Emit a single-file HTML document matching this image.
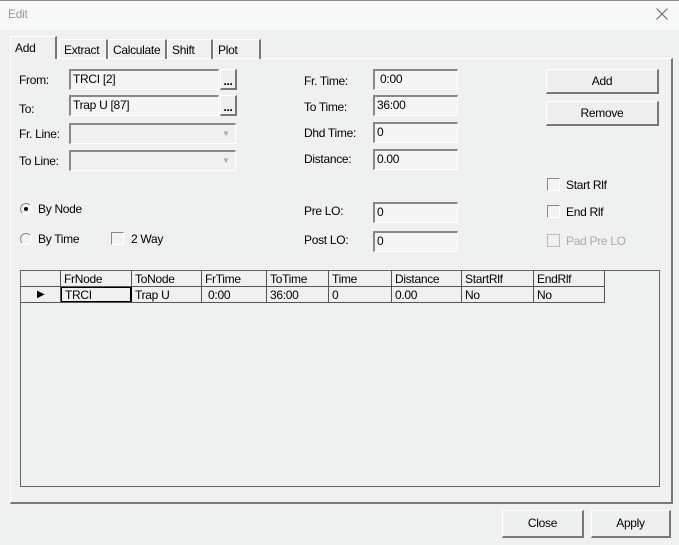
<!DOCTYPE html><html><head><style>
body{margin:0;width:679px;height:545px;background:#eff0f0;font-family:"Liberation Sans",sans-serif;font-size:12px;color:#000;position:relative;overflow:hidden;letter-spacing:-0.3px}
div,span,svg{position:absolute;box-sizing:border-box}
.title{left:0;top:0;width:679px;height:30px;background:#f7f8f8;border-top:1px solid #888}
.in{background:#f4f5f5;border-top:2px solid #888;border-left:2px solid #888;border-bottom:1px solid #fff;border-right:1px solid #fff;padding:0 2px;line-height:16px;height:21px}
.btn{background:#eef0f0;border-top:1px solid #fff;border-left:1px solid #fff;border-right:2px solid #777;border-bottom:2px solid #777;text-align:center}
.lbl{line-height:14px}
.cb{width:13px;height:13px;border-top:1px solid #888;border-left:1px solid #888;border-right:1px solid #fff;border-bottom:1px solid #fff;background:#f2f3f3}
.rd{width:12px;height:12px;border-radius:50%;border-top:1px solid #888;border-left:1px solid #888;border-right:1px solid #fff;border-bottom:1px solid #fff;background:#f2f3f3}
.tab{top:39px;height:20px;border-top:1px solid #fff;border-left:1px solid #fff;border-right:2px solid #777;padding:3px 4px 0;}
.c{top:0;height:100%;border-right:1px solid #555;padding-left:3px;line-height:16px}
</style></head><body>
<div class="title"></div>
<span style="left:8px;top:7px;color:#999;font-size:12px">Edit</span>
<svg style="left:656px;top:8px" width="12" height="12"><path d="M0.5 0.5L11.5 11.5M11.5 0.5L0.5 11.5" stroke="#666" stroke-width="1"/></svg>
<div style="left:10px;top:58px;width:663px;height:446px;border-top:1px solid #fff;border-left:1px solid #fff;border-right:2px solid #777;border-bottom:2px solid #777"></div>
<div class="tab" style="left:10px;top:36px;height:23px;width:47px;background:#eff0f0;border-bottom:none;padding-top:4px">Add</div>
<div class="tab" style="left:59px;width:49px">Extract</div>
<div class="tab" style="left:108px;width:59px">Calculate</div>
<div class="tab" style="left:167px;width:46px">Shift</div>
<div class="tab" style="left:213px;width:48px">Plot</div>
<span class="lbl" style="left:19px;top:73px">From:</span>
<span class="lbl" style="left:19px;top:102px">To:</span>
<span class="lbl" style="left:19px;top:127px">Fr. Line:</span>
<span class="lbl" style="left:19px;top:154px">To Line:</span>
<div class="in" style="left:69px;top:69px;width:150px">TRCI [2]</div>
<div class="btn" style="left:220px;top:69px;width:17px;height:21px;line-height:22px;font-weight:bold">...</div>
<div class="in" style="left:69px;top:95px;width:150px">Trap U [87]</div>
<div class="btn" style="left:220px;top:95px;width:17px;height:21px;line-height:22px;font-weight:bold">...</div>
<div class="in" style="left:69px;top:123px;width:167px;background:#eff0f0"></div>
<span style="left:222px;top:129px;color:#aaa;font-size:8px">▼</span>
<div class="in" style="left:69px;top:150px;width:167px;background:#eff0f0"></div>
<span style="left:222px;top:156px;color:#aaa;font-size:8px">▼</span>
<span class="lbl" style="left:304px;top:74px">Fr. Time:</span>
<span class="lbl" style="left:304px;top:100px">To Time:</span>
<span class="lbl" style="left:304px;top:126px">Dhd Time:</span>
<span class="lbl" style="left:304px;top:152px">Distance:</span>
<span class="lbl" style="left:304px;top:204px">Pre LO:</span>
<span class="lbl" style="left:304px;top:233px">Post LO:</span>
<div class="in" style="left:373px;top:69px;width:85px">&nbsp;0:00</div>
<div class="in" style="left:373px;top:95px;width:85px">36:00</div>
<div class="in" style="left:373px;top:122px;width:85px">0</div>
<div class="in" style="left:373px;top:149px;width:85px">0.00</div>
<div class="in" style="left:373px;top:202px;width:85px">0</div>
<div class="in" style="left:373px;top:231px;width:85px">0</div>
<div class="btn" style="left:546px;top:69px;width:113px;height:25px;line-height:22px">Add</div>
<div class="btn" style="left:546px;top:101px;width:113px;height:25px;line-height:22px">Remove</div>
<div class="cb" style="left:547px;top:178px"></div><span class="lbl" style="left:566px;top:178px">Start Rlf</span>
<div class="cb" style="left:547px;top:205px"></div><span class="lbl" style="left:566px;top:205px">End Rlf</span>
<div class="cb" style="left:547px;top:234px;background:#eff0f0;border-color:#bbb"></div><span class="lbl" style="left:566px;top:234px;color:#aaa">Pad Pre LO</span>
<div class="rd" style="left:20px;top:203px"></div><div style="left:24px;top:207px;width:4px;height:4px;border-radius:50%;background:#000"></div>
<span class="lbl" style="left:38px;top:202px">By Node</span>
<div class="rd" style="left:20px;top:233px"></div><span class="lbl" style="left:38px;top:232px">By Time</span>
<div class="cb" style="left:111px;top:232px"></div><span class="lbl" style="left:131px;top:232px">2 Way</span>
<div style="left:20px;top:270px;width:640px;height:217px;border:1px solid #666;background:#eff0f0"></div>
<div style="left:21px;top:271px;width:584px;height:16px;border-bottom:1px solid #555">
<div class="c" style="left:0;width:40px"></div>
<div class="c" style="left:40px;width:71px">FrNode</div>
<div class="c" style="left:111px;width:70px">ToNode</div>
<div class="c" style="left:181px;width:65px">FrTime</div>
<div class="c" style="left:246px;width:62px">ToTime</div>
<div class="c" style="left:308px;width:63px">Time</div>
<div class="c" style="left:371px;width:70px">Distance</div>
<div class="c" style="left:441px;width:72px">StartRlf</div>
<div class="c" style="left:513px;width:71px">EndRlf</div>
</div>
<div style="left:21px;top:287px;width:584px;height:16px;border-bottom:1px solid #555">
<div class="c" style="left:0;width:40px;padding-left:16px;font-size:10px">▶</div>
<div class="c" style="left:40px;width:71px;border:1px solid #000;border-right:2px solid #000;line-height:14px">TRCI</div>
<div class="c" style="left:111px;width:70px">Trap U</div>
<div class="c" style="left:181px;width:65px">&nbsp;0:00</div>
<div class="c" style="left:246px;width:62px">36:00</div>
<div class="c" style="left:308px;width:63px">0</div>
<div class="c" style="left:371px;width:70px">0.00</div>
<div class="c" style="left:441px;width:72px">No</div>
<div class="c" style="left:513px;width:71px">No</div>
</div>
<div class="btn" style="left:502px;top:510px;width:82px;height:28px;line-height:25px">Close</div>
<div class="btn" style="left:591px;top:510px;width:80px;height:28px;line-height:25px">Apply</div>
</body></html>
